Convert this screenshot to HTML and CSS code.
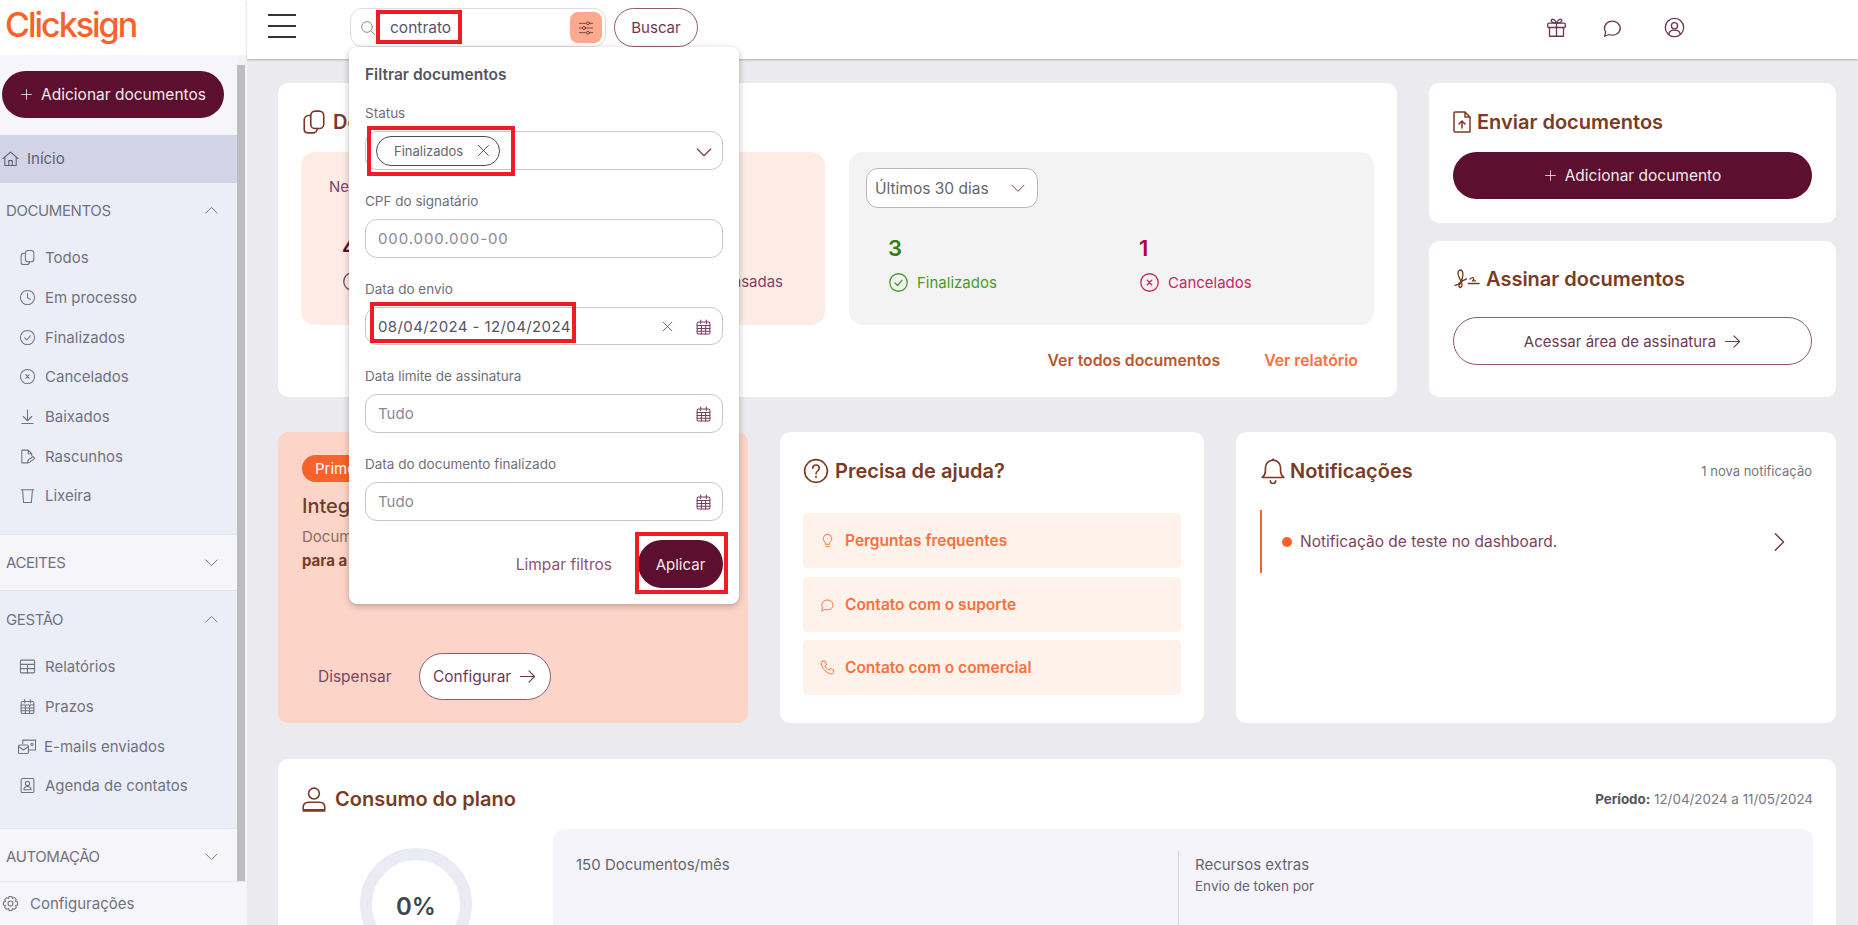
FILE: index.html
```html
<!DOCTYPE html>
<html lang="pt-BR">
<head>
  <meta charset="UTF-8" />
  <title>Clicksign</title>
  <link rel="stylesheet" href="styles.css">
</head>
<body>
  <svg class="sprite" width="0" height="0">
    <symbol id="i-copy" viewBox="0 0 24 24"><rect x="9" y="2" width="12" height="16" rx="4"/><path d="M9 6H7a4 4 0 0 0-4 4v9a3 3 0 0 0 3 3h5a4 4 0 0 0 4-4"/></symbol>
    <symbol id="i-clock" viewBox="0 0 24 24"><circle cx="12" cy="12" r="10"/><path d="M12 6v6.5l4 2"/></symbol>
    <symbol id="i-check" viewBox="0 0 24 24"><circle cx="12" cy="12" r="10"/><path d="M8 12.5l3 3 5-6"/></symbol>
    <symbol id="i-cancel" viewBox="0 0 24 24"><circle cx="12" cy="12" r="10"/><path d="M9.5 9.5l5 5M14.5 9.5l-5 5"/></symbol>
    <symbol id="i-down" viewBox="0 0 24 24"><path d="M12 3v15M6 12l6 6 6-6M4 22h16"/></symbol>
    <symbol id="i-draft" viewBox="0 0 24 24"><path d="M11 21H4V3h9l5 5v3M13 3v5h5"/><path d="M12 21l1-4 7-5 2 3-7 5z"/></symbol>
    <symbol id="i-trash" viewBox="0 0 24 24"><path d="M3 4h18M5 4l1.500 18h11L19 4"/></symbol>
    <symbol id="i-table" viewBox="0 0 24 24"><rect x="2" y="3" width="20" height="18" rx="1.500"/><path d="M2 9h20M2 15h20M12 9v12"/></symbol>
    <symbol id="i-calendar" viewBox="0 0 24 24"><rect x="3" y="5" width="18" height="17" rx="2"/><path d="M8 2v5M16 2v5M3 10h18M3 14h18M3 18h18M9 10v12M15 10v12"/></symbol>
    <symbol id="i-mail" viewBox="0 0 28 24"><path d="M8 8V3h18v14h-9"/><rect x="2" y="10" width="14" height="12" rx="2"/><path d="M2 12l7 5 7-5"/><circle cx="21" cy="9" r="1.500"/></symbol>
    <symbol id="i-contact" viewBox="0 0 24 24"><rect x="3" y="2" width="18" height="20" rx="2"/><circle cx="12" cy="9" r="3"/><path d="M7 18c0-6 10-6 10 0z"/></symbol>
    <symbol id="i-plus" viewBox="0 0 24 24"><path d="M12 3v18M3 12h18"/></symbol>
    <symbol id="i-up" viewBox="0 0 24 24"><path d="M3 16l9-9 9 9"/></symbol>
    <symbol id="i-chevron" viewBox="0 0 24 24"><path d="M3 8l9 9 9-9"/></symbol>
    <symbol id="i-right" viewBox="0 0 24 24"><path d="M8 3l9 9-9 9"/></symbol>
    <symbol id="i-close" viewBox="0 0 24 24"><path d="M4 4l16 16M20 4L4 20"/></symbol>
    <symbol id="i-arrow" viewBox="0 0 24 24"><path d="M2 12h20M14 4l8 8-8 8"/></symbol>
    <symbol id="i-home" viewBox="0 0 24 24"><path d="M1.500 12L12 3l10.500 9M4 10v12h16V10M9.500 22v-7h5v7"/></symbol>
    <symbol id="i-gear" viewBox="0 0 24 24"><circle cx="12" cy="12" r="3.500"/><path d="M10 2h4l.7 3 2.700-1.300 2.800 2.800L19 9.300l3 .7v4l-3 .7 1.200 2.800-2.800 2.800-2.700-1.300-.7 3h-4l-.7-3-2.700 1.300-2.800-2.800L5 14.700 2 14v-4l3-.7-1.200-2.800 2.800-2.800L9.300 5z"/></symbol>
    <symbol id="i-search" viewBox="0 0 24 24"><circle cx="10.500" cy="10.500" r="8"/><path d="M16.500 16.500L22 22"/></symbol>
    <symbol id="i-sliders" viewBox="0 0 24 24"><path d="M2 5h20M2 12h20M2 19h20"/><circle cx="15" cy="5" r="2.200" fill="#fca98f"/><circle cx="9" cy="12" r="2.200" fill="#fca98f"/><circle cx="15" cy="19" r="2.200" fill="#fca98f"/></symbol>
    <symbol id="i-gift" viewBox="0 0 24 24"><rect x="2" y="7" width="20" height="5" rx="1"/><path d="M4 12v10h16V12M12 7v15M12 7C9 7 6 6 6 4s3-3 6 3c3-6 6-5 6-3s-3 3-6 3z"/></symbol>
    <symbol id="i-chat" viewBox="0 0 24 24"><path d="M3 22l1.200-5A9 8 0 1 1 8 20z"/></symbol>
    <symbol id="i-user" viewBox="0 0 24 24"><circle cx="12" cy="12" r="10.500"/><circle cx="12" cy="10" r="3.500"/><path d="M5.500 19.500c1-6 12-6 13 0"/></symbol>
    <symbol id="i-upload" viewBox="3 1 18 22"><path d="M5 2h10l5 5v15H5a1 1 0 0 1-1-1V3a1 1 0 0 1 1-1zM15 2v5h5M12 18v-7M9 14l3-3 3 3"/></symbol>
    <symbol id="i-sign" viewBox="0 0 30 24"><path d="M2 19c5 0 9-6 9-12 0-3-1-5-3-5s-3 3-2 6c1 4 4 7 4 10s-2 4-3 3 1-7 8-9"/><path d="M17 17h12M19 12c2-2 4-2 4 0s-2 2-1 2h3"/></symbol>
    <symbol id="i-help" viewBox="0 0 24 24"><circle cx="12" cy="12" r="10.500"/><path d="M9 9.500c0-4 6-4 6 0 0 2.500-3 2.500-3 5M12 17v1"/></symbol>
    <symbol id="i-bulb" viewBox="0 0 24 24"><path d="M12 2a7 7 0 0 1 3.500 13v3h-7v-3A7 7 0 0 1 12 2zM9.500 21.500h5"/></symbol>
    <symbol id="i-phone" viewBox="0 0 24 24"><path d="M4 2l4-.5 2.500 6L8 9.500c1 3 3.500 5.500 6.500 6.500l2-2.500 5.500 2.500-.5 4c-.2 1.500-1.500 2.500-3 2.300C10 21 3 14 1.800 5 1.600 3.500 2.500 2.200 4 2z"/></symbol>
    <symbol id="i-bell" viewBox="0 0 24 24"><path d="M2 18c2-1.500 3-3 3-6V9a7 7 0 0 1 14 0v3c0 3 1 4.500 3 6zM9.500 21a2.500 2.500 0 0 0 5 0M12 2V1"/></symbol>
    <symbol id="i-person" viewBox="0 0 24 24"><circle cx="12" cy="7" r="5"/><path d="M2 22v-2c0-3 2-5 5-5h10c3 0 5 2 5 5v2zM2 23h20"/></symbol>
  </svg>

  <div class="app">
    <aside class="sidebar">
      <div class="logo">Clicksign</div>
      <div class="side-scroll">
        <nav class="side-nav">
          <div class="add-wrap">
            <button class="btn btn-wine btn-side"><svg class="ic-plus"><use href="#i-plus"/></svg> Adicionar documentos</button>
          </div>
          <a class="home-link"><svg class="ic"><use href="#i-home"/></svg> Início</a>

          <section class="group open group-docs">
            <div class="group-head">DOCUMENTOS <svg class="ic-sm"><use href="#i-up"/></svg></div>
            <a class="side-item"><svg class="ic"><use href="#i-copy"/></svg> Todos</a>
            <a class="side-item"><svg class="ic"><use href="#i-clock"/></svg> Em processo</a>
            <a class="side-item"><svg class="ic"><use href="#i-check"/></svg> Finalizados</a>
            <a class="side-item"><svg class="ic"><use href="#i-cancel"/></svg> Cancelados</a>
            <a class="side-item"><svg class="ic"><use href="#i-down"/></svg> Baixados</a>
            <a class="side-item"><svg class="ic"><use href="#i-draft"/></svg> Rascunhos</a>
            <a class="side-item"><svg class="ic"><use href="#i-trash"/></svg> Lixeira</a>
          </section>

          <section class="group group-closed">
            <div class="group-head">ACEITES <svg class="ic-sm"><use href="#i-chevron"/></svg></div>
          </section>

          <section class="group open group-gestao">
            <div class="group-head">GESTÃO <svg class="ic-sm"><use href="#i-up"/></svg></div>
            <a class="side-item"><svg class="ic"><use href="#i-table"/></svg> Relatórios</a>
            <a class="side-item"><svg class="ic"><use href="#i-calendar"/></svg> Prazos</a>
            <a class="side-item"><svg class="ic ic-wide"><use href="#i-mail"/></svg> E-mails enviados</a>
            <a class="side-item"><svg class="ic"><use href="#i-contact"/></svg> Agenda de contatos</a>
          </section>

          <section class="group group-closed group-auto">
            <div class="group-head">AUTOMAÇÃO <svg class="ic-sm"><use href="#i-chevron"/></svg></div>
          </section>
        </nav>
        <div class="scrollbar"><span class="scroll-thumb"></span></div>
      </div>
      <a class="side-config"><svg class="ic"><use href="#i-gear"/></svg> Configurações</a>
    </aside>

    <div class="content">
      <header class="topbar">
        <button class="hamburger" aria-label="Menu"><span></span><span></span><span></span></button>
        <div class="search-area">
          <div class="search">
            <svg class="search-icon"><use href="#i-search"/></svg>
            <span class="search-text">contrato</span>
            <span class="filter-btn"><svg><use href="#i-sliders"/></svg></span>
            <span class="mark mark-search"></span>
          </div>
          <button class="btn btn-outline btn-buscar">Buscar</button>

          <div class="popover">
            <h4 class="pop-title">Filtrar documentos</h4>

            <label class="field-label">Status</label>
            <div class="field">
              <span class="chip">Finalizados <svg><use href="#i-close"/></svg></span>
              <svg class="field-chevron"><use href="#i-chevron"/></svg>
              <span class="mark mark-chip"></span>
            </div>

            <label class="field-label">CPF do signatário</label>
            <div class="field field-text"><span class="placeholder placeholder-cpf">000.000.000-00</span></div>

            <label class="field-label">Data do envio</label>
            <div class="field field-text field-short">
              <span class="value">08/04/2024 - 12/04/2024</span>
              <svg class="field-clear"><use href="#i-close"/></svg>
              <svg class="field-cal"><use href="#i-calendar"/></svg>
              <span class="mark mark-date"></span>
            </div>

            <label class="field-label">Data limite de assinatura</label>
            <div class="field field-text"><span class="placeholder">Tudo</span><svg class="field-cal"><use href="#i-calendar"/></svg></div>

            <label class="field-label">Data do documento finalizado</label>
            <div class="field field-text"><span class="placeholder">Tudo</span><svg class="field-cal"><use href="#i-calendar"/></svg></div>

            <div class="pop-actions">
              <a class="clear-link">Limpar filtros</a>
              <span class="apply-wrap">
                <button class="btn btn-wine btn-apply">Aplicar</button>
                <span class="mark mark-apply"></span>
              </span>
            </div>
          </div>
        </div>
        <div class="top-icons">
          <svg><use href="#i-gift"/></svg>
          <svg><use href="#i-chat"/></svg>
          <svg><use href="#i-user"/></svg>
        </div>
      </header>

      <main class="main">
        <div class="row row-top">
          <section class="card card-docs">
            <h3 class="card-title"><svg class="title-icon"><use href="#i-copy"/></svg> Documentos</h3>
            <div class="panels">
              <div class="panel panel-pink">
                <p class="panel-note">Neste momento</p>
                <div class="stats stats-pink">
                  <div class="stat">
                    <strong class="stat-num num-wine">4</strong>
                    <span class="stat-label label-wine"><svg><use href="#i-clock"/></svg> Em processo</span>
                  </div>
                  <div class="stat">
                    <strong class="stat-num num-wine">0</strong>
                    <span class="stat-label label-wine"><svg><use href="#i-clock"/></svg> Assinaturas atrasadas</span>
                  </div>
                </div>
              </div>
              <div class="panel panel-grey">
                <div class="period-select">Últimos 30 dias <svg><use href="#i-chevron"/></svg></div>
                <div class="stats stats-grey">
                  <div class="stat stat-wide">
                    <strong class="stat-num num-green">3</strong>
                    <span class="stat-label label-green"><svg><use href="#i-check"/></svg> Finalizados</span>
                  </div>
                  <div class="stat">
                    <strong class="stat-num num-red">1</strong>
                    <span class="stat-label label-red"><svg><use href="#i-cancel"/></svg> Cancelados</span>
                  </div>
                </div>
              </div>
            </div>
            <div class="card-links">
              <a class="link-brown">Ver todos documentos</a>
              <a class="link-orange">Ver relatório</a>
            </div>
          </section>

          <div class="side-cards">
            <section class="card card-send">
              <h3 class="card-title"><svg class="title-icon title-icon-sm"><use href="#i-upload"/></svg> Enviar documentos</h3>
              <button class="btn btn-wine btn-full"><svg class="ic-plus"><use href="#i-plus"/></svg> Adicionar documento</button>
            </section>
            <section class="card card-sign">
              <h3 class="card-title"><svg class="title-icon title-icon-sign"><use href="#i-sign"/></svg> Assinar documentos</h3>
              <button class="btn btn-outline btn-full">Acessar área de assinatura <svg class="ic"><use href="#i-arrow"/></svg></button>
            </section>
          </div>
        </div>

        <div class="row row-mid">
          <section class="card card-promo">
            <span class="badge">Primeiros passos</span>
            <h3 class="promo-title">Integração com WhatsApp</h3>
            <p class="promo-text">Documentos enviados com mais agilidade</p>
            <p class="promo-text promo-strong">para a sua empresa</p>
            <div class="promo-actions">
              <a class="dismiss">Dispensar</a>
              <button class="btn btn-outline btn-config">Configurar <svg class="ic"><use href="#i-arrow"/></svg></button>
            </div>
          </section>

          <section class="card card-help">
            <h3 class="card-title"><svg class="title-icon"><use href="#i-help"/></svg> Precisa de ajuda?</h3>
            <a class="help-item"><svg><use href="#i-bulb"/></svg> Perguntas frequentes</a>
            <a class="help-item"><svg><use href="#i-chat"/></svg> Contato com o suporte</a>
            <a class="help-item"><svg><use href="#i-phone"/></svg> Contato com o comercial</a>
          </section>

          <section class="card card-notif">
            <div class="card-head">
              <h3 class="card-title title-tight"><svg class="title-icon"><use href="#i-bell"/></svg> Notificações</h3>
              <span class="card-aside">1 nova notificação</span>
            </div>
            <div class="notif-row">
              <span class="notif-dot"></span>
              <span class="notif-text">Notificação de teste no dashboard.</span>
              <svg class="notif-arrow"><use href="#i-right"/></svg>
            </div>
          </section>
        </div>

        <section class="card card-plan">
          <div class="card-head">
            <h3 class="card-title title-wide"><svg class="title-icon"><use href="#i-person"/></svg> Consumo do plano</h3>
            <span class="card-aside plan-period"><b>Período:</b> 12/04/2024 a 11/05/2024</span>
          </div>
          <div class="plan-body">
            <div class="donut"><span>0%</span></div>
            <div class="plan-panel">
              <div class="plan-col plan-col-main">150 Documentos/mês</div>
              <div class="plan-col plan-col-extra">
                Recursos extras
                <small>Envio de token por</small>
              </div>
            </div>
          </div>
        </section>
      </main>
    </div>
  </div>
</body>
</html>
```

FILE: styles.css
```css
* {
  box-sizing: border-box;
  padding: 0;
  margin: 0;
}

body {
  font-family: 'Inter', 'Noto Sans', sans-serif;
  color: #5a5a66;
  background: #eaeaef;
  height: 100vh;
  overflow: hidden;
}

.sprite { position: absolute; }

svg {
  fill: none;
  stroke: currentColor;
  stroke-width: 1.5;
  stroke-linecap: round;
  stroke-linejoin: round;
}

.app {
  display: flex;
  height: 925px;
}

/* sidebar */
.sidebar {
  width: 247px;
  flex: none;
  display: flex;
  flex-direction: column;
  background: #f5f5fa;
  color: #71727f;
  font-size: 15px;
}

.logo {
  height: 55px;
  background: #fff;
  padding-left: 5px;
  color: #f9622a;
  font-size: 34px;
  font-weight: 500;
  letter-spacing: -2px;
  line-height: 50px;
}

.side-scroll {
  display: flex;
  height: 826px;
}

.side-nav {
  width: 237px;
  flex: none;
}

.scrollbar {
  width: 9px;
  padding: 10px 1px 0 0;
  background: #f3f3f6;
}

.scroll-thumb {
  display: block;
  height: 100%;
  background: #bdbdc0;
}

.add-wrap {
  padding: 16px 13px 17px 2px;
}

.btn {
  display: flex;
  align-items: center;
  justify-content: center;
  gap: 8px;
  font: inherit;
  font-size: 15.5px;
  border-radius: 24px;
  cursor: pointer;
}

.btn-wine {
  background: #5c0f2e;
  color: #f3e9ec;
  border: none;
}

.btn-outline {
  background: #fff;
  color: #6c3a55;
  border: 1.5px solid #8f5a72;
}

.btn-side {
  width: 222px;
  height: 47px;
}

.ic {
  width: 17px;
  height: 17px;
  flex: none;
}

.ic-plus {
  width: 13px;
  height: 13px;
  flex: none;
}

.ic-wide { width: 22px; margin: 0 -3px 0 -3px; }

.ic-sm {
  width: 15px;
  height: 15px;
  flex: none;
}

.home-link {
  display: flex;
  align-items: center;
  gap: 8px;
  height: 48px;
  padding: 0 0 2px 2px;
  background: #d2d4e6;
  color: #5f6173;
}

.group {
  border-bottom: 1px solid #e2e3ee;
}

.group.open { background: #eceef7; }

.group-docs { height: 352px; }
.group-gestao { height: 238px; }
.group-closed { height: 56px; }
.group-auto { height: 52px; border-bottom: none; }

.group-head {
  display: flex;
  align-items: center;
  justify-content: space-between;
  height: 55px;
  padding: 0 18px 0 6px;
  letter-spacing: -0.4px;
}

.group-closed .group-head { height: 54px; }
.group-gestao .group-head { height: 56px; }
.group-auto .group-head { height: 54px; }

.side-item {
  display: flex;
  align-items: center;
  gap: 9px;
  height: 39.7px;
  padding-left: 19px;
}

.side-config {
  display: flex;
  align-items: center;
  gap: 11px;
  height: 44px;
  padding-left: 2px;
  border-top: 1px solid #e6e6ef;
  background: #f5f5fa;
}

/* top bar */
.content {
  flex: 1;
  min-width: 0;
  display: flex;
  flex-direction: column;
}

.topbar {
  display: flex;
  align-items: flex-start;
  height: 59px;
  flex: none;
  padding: 8px 173px 0 21px;
  background: #fff;
  box-shadow: 0 1px 2px rgba(0, 0, 0, 0.25);
  position: relative;
  z-index: 5;
}

.hamburger {
  width: 28px;
  height: 24px;
  margin-top: 6px;
  display: flex;
  flex-direction: column;
  justify-content: space-between;
  background: none;
  border: none;
}

.hamburger span {
  display: block;
  height: 2px;
  background: #34343c;
}

.search-area {
  display: flex;
  gap: 8px;
  margin-left: 54px;
  position: relative;
}

.search {
  position: relative;
  width: 256px;
  height: 39px;
  display: flex;
  align-items: center;
  border: 1.5px solid #dcdce2;
  border-radius: 12px;
  padding-left: 9px;
  background: #fff;
}

.search-icon {
  width: 16px;
  height: 16px;
  color: #8a8a92;
  flex: none;
}

.search-text {
  margin-left: 14px;
  font-size: 15.5px;
  color: #55556a;
}

.filter-btn {
  position: absolute;
  top: 3px;
  right: 3px;
  width: 32px;
  height: 31px;
  border-radius: 8px;
  background: #fca98f;
  color: #6c3a3a;
  display: flex;
  align-items: center;
  justify-content: center;
}

.filter-btn svg {
  width: 16px;
  height: 16px;
  stroke-width: 1.3;
}

.btn-buscar {
  width: 84px;
  height: 39px;
  font-size: 15px;
}

.top-icons {
  margin-left: auto;
  margin-top: 9px;
  display: flex;
  gap: 35px;
  color: #6e3650;
}

.top-icons svg {
  width: 21px;
  height: 21px;
}

.top-icons svg:last-child { margin-left: 6px; }

/* filter popover */
.popover {
  position: absolute;
  top: 39px;
  left: -1px;
  width: 390px;
  height: 557px;
  padding: 19px 16px 15px;
  background: #fff;
  border-radius: 8px;
  box-shadow: 0 2px 6px rgba(40, 20, 20, 0.3);
  z-index: 10;
}

.pop-title {
  font-size: 15.5px;
  line-height: 18px;
  font-weight: 600;
  color: #55555f;
  margin-bottom: 20px;
}

.field-label {
  display: block;
  font-size: 13.5px;
  line-height: 18px;
  color: #70707a;
  margin-bottom: 9px;
}

.field {
  position: relative;
  height: 39px;
  margin-bottom: 22px;
  border: 1.5px solid #c6c6cd;
  border-radius: 12px;
  display: flex;
  align-items: center;
  padding-left: 10px;
  background: #fff;
}

.field-text {
  font-size: 15px;
  padding-left: 12px;
}

.field-short { height: 38px; margin-bottom: 22px; }

.placeholder { color: #8a8a92; }
.placeholder-cpf { letter-spacing: 0.9px; }
.value { color: #55555f; letter-spacing: 0.4px; }

.chip {
  display: flex;
  align-items: center;
  justify-content: space-between;
  width: 124px;
  height: 30px;
  padding: 0 8px 0 17px;
  border: 1.5px solid #4d4d55;
  border-radius: 15px;
  font-size: 13px;
  color: #66666e;
}

.chip svg { width: 15px; height: 15px; color: #4d4d55; }

.field-chevron {
  position: absolute;
  right: 9px;
  top: 11px;
  width: 18px;
  height: 18px;
  color: #6e3650;
}

.field-clear {
  position: absolute;
  right: 48px;
  top: 12px;
  width: 13px;
  height: 13px;
  color: #7c3c5c;
}

.field-cal {
  position: absolute;
  right: 10px;
  top: 10px;
  width: 17px;
  height: 18px;
  color: #7c3c5c;
}

.pop-actions {
  display: flex;
  align-items: center;
  justify-content: flex-end;
  margin-top: -3px;
  gap: 26px;
}

.clear-link {
  font-size: 15.5px;
  color: #8b5670;
}

.apply-wrap { position: relative; }

.btn-apply {
  width: 85px;
  height: 48px;
  font-size: 15px;
}

/* red annotations drawn over the screenshot */
.mark {
  position: absolute;
  border: 4px solid #ee1c25;
  pointer-events: none;
}

.mark-search { left: 25px; top: 1px; width: 86px; height: 34px; }
.mark-chip { left: 1px; top: -6px; width: 148px; height: 50px; }
.mark-date { left: 4px; top: -6px; width: 206px; height: 41px; }
.mark-apply { left: -3px; top: -8px; width: 93px; height: 62px; }

/* main area */
.main {
  flex: 1;
  min-height: 0;
  padding: 24px 22px 0 31px;
  overflow: hidden;
}

.row {
  display: flex;
}

.row-top {
  gap: 32px;
  height: 314px;
  margin-bottom: 35px;
}

.row-mid {
  gap: 32px;
  height: 291px;
  margin-bottom: 36px;
}

.card {
  background: #fff;
  border-radius: 10px;
}

.card-title {
  display: flex;
  align-items: center;
  gap: 6px;
  font-size: 20px;
  line-height: 26px;
  font-weight: 600;
  color: #7a3b26;
}

.title-tight { gap: 4px; }
.title-wide { gap: 8px; }

.title-icon {
  width: 26px;
  height: 26px;
  flex: none;
}

.title-icon-sm { width: 18px; height: 22px; }
.title-icon-sign { width: 27px; height: 22px; }

.card-docs {
  width: 1119px;
  flex: none;
  padding: 26px 23px 0;
}

.panels {
  display: flex;
  gap: 24px;
  margin-top: 17px;
}

.panel {
  height: 173px;
  border-radius: 14px;
}

.panel-pink {
  width: 524px;
  padding: 26px 42px 0 28px;
  background: #fdece6;
}

.panel-note {
  font-size: 15px;
  line-height: 18px;
  color: #7d4560;
}

.panel-grey {
  width: 525px;
  padding: 16px 17px;
  background: #f3f3f4;
}

.period-select {
  display: flex;
  align-items: center;
  justify-content: space-between;
  width: 172px;
  height: 40px;
  padding: 0 11px 0 8px;
  border: 1.5px solid #b8b8bf;
  border-radius: 12px;
  background: #fff;
  font-size: 15.5px;
  color: #66666e;
}

.period-select svg {
  width: 16px;
  height: 16px;
  color: #7c3c5c;
}

.stats {
  display: flex;
}

.stats-pink {
  margin-top: 37px;
  padding-left: 13px;
  justify-content: space-between;
}

.stats-grey {
  margin-top: 26px;
  padding-left: 22px;
}

.stat-wide { width: 251px; }

.stat-num {
  display: block;
  font-size: 22px;
  line-height: 28px;
  font-weight: 600;
}

.stat-label {
  display: flex;
  align-items: center;
  gap: 8px;
  margin-top: 10px;
  font-size: 15px;
}

.stat-label svg {
  width: 21px;
  height: 21px;
  flex: none;
}

.num-wine { color: #5c0f2e; }
.num-green { color: #2f7d10; }
.num-red { color: #b8003f; }
.label-wine { color: #7d4560; }
.label-green { color: #4a9a2e; }
.label-red { color: #c8285f; }

.card-links {
  display: flex;
  justify-content: flex-end;
  gap: 44px;
  margin: 27px 16px 0 0;
  font-size: 15.8px;
  line-height: 18px;
  font-weight: 600;
}

.link-brown { color: #b9582f; }
.link-orange { color: #f9703e; }

.side-cards {
  flex: 1;
  display: flex;
  flex-direction: column;
  gap: 18px;
}

.card-send {
  height: 140px;
  padding: 26px 24px 0;
}

.card-sign {
  height: 156px;
  padding: 25px 24px 0;
}

.btn-full {
  width: 100%;
  height: 47px;
  margin-top: 17px;
}

.card-sign .btn-full { margin-top: 25px; height: 48px; font-size: 15px; }

.card-promo {
  width: 470px;
  flex: none;
  padding: 23px 24px 23px;
  background: #fcd5c8;
  display: flex;
  flex-direction: column;
}

.badge {
  align-self: flex-start;
  height: 27px;
  padding: 0 13px;
  border-radius: 14px;
  background: #f9622a;
  color: #fff;
  font-size: 15px;
  line-height: 27px;
}

.promo-title {
  margin-top: 11px;
  font-size: 20px;
  line-height: 26px;
  font-weight: 500;
  color: #6e3d30;
}

.promo-text {
  margin-top: 8px;
  font-size: 15px;
  line-height: 20px;
  color: #8f6a60;
}

.promo-strong {
  margin-top: 4px;
  font-weight: 700;
  color: #7a3b26;
}

.promo-actions {
  margin-top: auto;
  display: flex;
  align-items: center;
  gap: 27px;
  padding-left: 16px;
  font-size: 15.5px;
}

.dismiss { color: #7d4560; }

.btn-config {
  width: 132px;
  height: 47px;
}

.card-help {
  width: 424px;
  flex: none;
  padding: 26px 23px 0;
}

.help-item {
  display: flex;
  align-items: center;
  gap: 10px;
  height: 55px;
  margin-bottom: 8.500px;
  padding-left: 17px;
  background: #fef2ea;
  border-radius: 3px;
  font-size: 15.5px;
  font-weight: 600;
  color: #f9703e;
}

.help-item svg {
  width: 15px;
  height: 17px;
  flex: none;
}

.card-help .card-title { margin-bottom: 29px; }

.card-notif {
  flex: 1;
  padding: 26px 24px 0 24px;
}

.card-head {
  display: flex;
  align-items: center;
  justify-content: space-between;
}

.card-aside {
  font-size: 13px;
  color: #77777f;
}

.plan-period { font-size: 13.4px; }

.notif-row {
  display: flex;
  align-items: center;
  height: 63px;
  margin-top: 26px;
  padding: 0 22px 0 20px;
  border-left: 2px solid #f9622a;
  font-size: 15.5px;
  color: #7d4560;
}

.notif-dot {
  width: 10px;
  height: 10px;
  border-radius: 50%;
  background: #f9622a;
  margin-right: 8px;
}

.notif-arrow {
  width: 22px;
  height: 22px;
  margin-left: auto;
  color: #6e3650;
}

.card-plan {
  height: 240px;
  padding: 27px 23px 0;
}

.plan-period b { font-weight: 700; color: #55555f; }

.plan-body {
  display: flex;
  margin-top: 17px;
}

.donut {
  width: 112px;
  height: 112px;
  margin: 19px 81px 0 59px;
  padding-top: 4px;
  flex: none;
  border: 12px solid #eaebf4;
  border-radius: 50%;
  display: flex;
  align-items: center;
  justify-content: center;
  font-size: 24px;
  font-weight: 600;
  color: #44444c;
}

.plan-panel {
  flex: 1;
  display: flex;
  height: 160px;
  padding-top: 22px;
  background: #f4f4fa;
  border-radius: 12px;
  font-size: 15px;
  color: #66666e;
}

.plan-col-main {
  width: 625px;
  flex: none;
  padding: 4px 0 0 23px;
}

.plan-col-extra {
  flex: 1;
  padding: 4px 0 0 16px;
  border-left: 1px solid #d4d5ea;
}

.plan-col-extra small {
  display: block;
  margin-top: 4px;
  font-size: 13.5px;
}
```
